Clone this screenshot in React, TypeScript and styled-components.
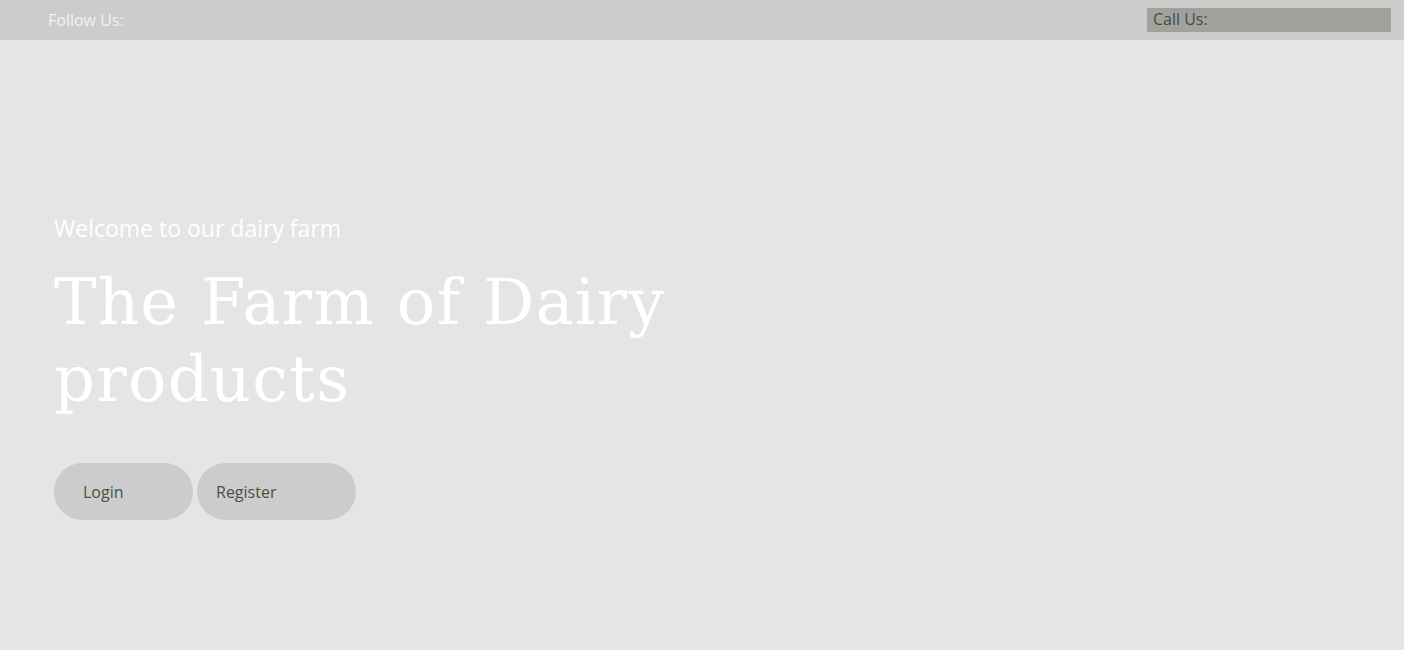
import React from "react";
import styled, { createGlobalStyle } from "styled-components";

const Global = createGlobalStyle`
  html, body { margin: 0; padding: 0; background: #ffffff; }
  #root { width: 1404px; min-height: 650px; background: #e5e5e5; }
  * { box-sizing: border-box; }
`;

const TopBar = styled.header`
  height: 40px;
  background: #cccccc;
  display: flex;
  align-items: center;
  justify-content: space-between;
  padding: 0 13px 1px 48px;
  font-family: "Open Sans", sans-serif;
  font-size: 16px;
`;

const Follow = styled.span`
  color: #f2f2f2;
`;

const CallBox = styled.div`
  width: 244px;
  height: 24px;
  background: #a2a29c;
  color: #464b42;
  padding: 0 0 1px 6px;
  display: flex;
  align-items: center;
`;

const Hero = styled.main`
  height: 610px;
  display: flex;
  flex-direction: column;
  padding: 173px 0 0 54px;
`;

const Welcome = styled.p`
  margin: 0 0 21px;
  font-family: "Open Sans", sans-serif;
  font-size: 23px;
  color: #ffffff;
  line-height: 30px;
`;

const Title = styled.h1`
  margin: 0;
  font-family: "DejaVu Serif", serif;
  font-weight: 400;
  font-size: 64px;
  letter-spacing: 1.2px;
  line-height: 77px;
  color: #ffffff;
  max-width: 700px;
`;

const Actions = styled.div`
  display: flex;
  gap: 4px;
  margin-top: 45px;
`;

const Pill = styled.button<{ $w: number; $pl: number }>`
  width: ${(p) => p.$w}px;
  height: 57px;
  padding: 0 0 0 ${(p) => p.$pl}px;
  text-align: left;
  border: none;
  border-radius: 29px;
  background: #cccccc;
  color: #4a5045;
  font-family: "Open Sans", sans-serif;
  font-size: 16px;
`;

export default function App() {
  return (
    <>
      <Global />
      <TopBar>
        <Follow>Follow Us:</Follow>
        <CallBox>Call Us:</CallBox>
      </TopBar>
      <Hero>
        <Welcome>Welcome to our dairy farm</Welcome>
        <Title>The Farm of Dairy products</Title>
        <Actions>
          <Pill $w={139} $pl={29}>Login</Pill>
          <Pill $w={159} $pl={19}>Register</Pill>
        </Actions>
      </Hero>
    </>
  );
}
